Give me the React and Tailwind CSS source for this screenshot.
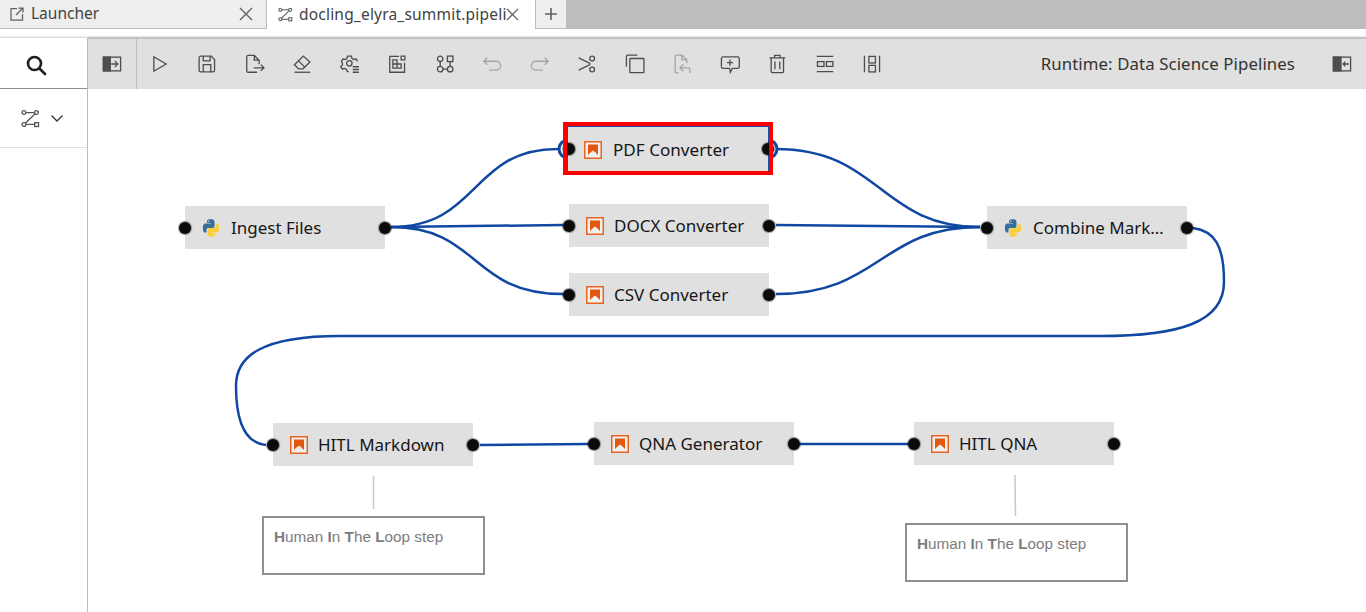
const fontCls = "font-['Noto_Sans','Open_Sans',sans-serif]";

function Ico({ children, dim }) {
  return (
    <svg width="22" height="22" viewBox="0 0 32 32" fill="none" stroke={dim ? "#a3a3a3" : "#4d4d4d"} strokeWidth="1.900" className="shrink-0">
      {children}
    </svg>
  );
}

function PipelineGlyph({ size = 16 }) {
  return (
    <svg width={size} height={size} viewBox="0 0 32 32" fill="none" stroke="#555" strokeWidth="2.200">
      <circle cx="5" cy="6" r="3.2" /><circle cx="26" cy="6" r="3.2" /><circle cx="5" cy="26" r="3.2" />
      <rect x="23" y="23" width="6.5" height="6.5" />
      <path d="M8.5 6h14M23.5 8.5 7.5 23.5M8.5 26h14" />
    </svg>
  );
}

function ToolBtn({ children }) {
  return <div className="w-[47.5px] flex justify-center shrink-0">{children}</div>;
}

function Toolbar() {
  return (
    <div className="h-[51px] bg-[#e0e0e0] flex items-center shrink-0 border-t border-[#c4c4c4] shadow-[0_-1px_1px_rgba(0,0,0,0.12)]">
      <div className="w-[49px] h-full flex items-center justify-center border-r border-[#bdbdbd] shrink-0">
        <Ico>
          <rect x="3.500" y="6" width="25" height="20" />
          <path d="M3.500 6h10v20h-10z" fill="#4d4d4d" />
          <path d="M15 16h9M20 11.500l4.500 4.500-4.500 4.500" />
        </Ico>
      </div>
      <div className="flex items-center -ml-[1px]">
        <ToolBtn><Ico><path d="M7 5.500v21L25 16z" /></Ico></ToolBtn>
        <ToolBtn><Ico><path d="M7 4.500h15l5 5V25a2.500 2.500 0 0 1-2.500 2.500H7A2.500 2.500 0 0 1 4.500 25V7A2.500 2.500 0 0 1 7 4.500z" /><path d="M10.500 4.500v7h10v-7M10.500 27.500V17h11v10.500" /></Ico></ToolBtn>
        <ToolBtn><Ico><path d="M19 28H6a2 2 0 0 1-2-2V5.500a2 2 0 0 1 2-2h9l7 7v6M15 3.500v7h7" /><path d="M14 21.500h15M24.500 17l4.500 4.500-4.500 4.500" /></Ico></ToolBtn>
        <ToolBtn><Ico><path d="M5 28h23" /><path d="M5 17 18 4.500 27.500 13l-10 10H11z" /><path d="M11 11.500l9 9" /></Ico></ToolBtn>
        <ToolBtn><Ico><path d="M14 27h-2l-1-3-3-1.500-3 1-2.500-3.500 2.500-2.500v-3L3.500 12 6 8.500l3 1 2.500-1.500 1-3.500h5.500l1 3.500 2.500 1.500 3-1L27 12" /><circle cx="15" cy="15" r="4" /><path d="M20 20h9M20 24h9M20 28h9" /></Ico></ToolBtn>
        <ToolBtn><Ico><path d="M19 5H5.500v23H27V14" /><path d="M22 4.500h5.500V10H22zM10 10h6v6h-6zM16 16h6v6h-6zM10 16v6h6" /></Ico></ToolBtn>
        <ToolBtn><Ico><circle cx="9" cy="8.500" r="4" /><rect x="19.500" y="4.500" width="8" height="8" /><circle cx="9" cy="23.500" r="4" /><circle cx="23.500" cy="23.500" r="4" /><path d="M9 12.500v7M23.500 12.500v7M13 23.500h6.500" /></Ico></ToolBtn>
        <ToolBtn><Ico dim><path d="M4 12h18a6.500 6.500 0 0 1 0 13H12M9 7l-5 5 5 5" /></Ico></ToolBtn>
        <ToolBtn><Ico dim><path d="M28 12H10a6.500 6.500 0 0 0 0 13h10M23 7l5 5-5 5" /></Ico></ToolBtn>
        <ToolBtn><Ico><circle cx="23.500" cy="8" r="3.500" /><circle cx="23.500" cy="24" r="3.500" /><path d="M4 7l17 8.500M4 25l17-8.500" /></Ico></ToolBtn>
        <ToolBtn><Ico><path d="M3.500 20V5a2 2 0 0 1 2-2h14" /><rect x="8.500" y="8" width="20.500" height="20.500" rx="1" /></Ico></ToolBtn>
        <ToolBtn><Ico dim><path d="M11 29H8a2 2 0 0 1-2-2V5a2 2 0 0 1 2-2h8l7 7v5M16 3v7h7" /><path d="M13 21.500h13a1.500 1.500 0 0 1 1.500 1.500v6M18 16.500l-5 5 5 5" /></Ico></ToolBtn>
        <ToolBtn><Ico><path d="M6 5.500h21a2.500 2.500 0 0 1 2.500 2.500v12a2.500 2.500 0 0 1-2.500 2.500h-7.500l-3 5.500-1-5.500H6A2.500 2.500 0 0 1 3.500 20V8A2.500 2.500 0 0 1 6 5.500z" /><path d="M16 9.500v9M11.500 14h9" /></Ico></ToolBtn>
        <ToolBtn><Ico><path d="M5 7h23M12.500 7V3.500h8V7M7.500 7v20a1.500 1.500 0 0 0 1.500 1.500h15a1.500 1.500 0 0 0 1.500-1.500V7M13 12.500v11M20 12.500v11" /></Ico></ToolBtn>
        <ToolBtn><Ico><path d="M4 5h24M4 27h24" /><rect x="5" y="12.500" width="9.500" height="7" /><rect x="18" y="12.500" width="9.500" height="7" /></Ico></ToolBtn>
        <ToolBtn><Ico><path d="M5 4v24M27 4v24" /><rect x="11.500" y="5" width="9.500" height="9.500" /><rect x="11.500" y="18" width="9.500" height="9.500" /></Ico></ToolBtn>
      </div>
      <div className="ml-auto flex items-center">
        <span className={`${fontCls} text-[16.800px] text-[#333] mr-[36px] tracking-[0.1px] whitespace-nowrap`}>Runtime: Data Science Pipelines</span>
        <div className="mr-[13px] w-[22px] flex justify-center">
          <Ico>
            <rect x="3.500" y="6" width="25" height="20" />
            <path d="M3.500 6h11v20h-11z" fill="#4d4d4d" />
            <path d="M26 16h-8M21 12.500 17.500 16l3.500 3.500" />
          </Ico>
        </div>
      </div>
    </div>
  );
}

function Tabs() {
  return (
    <div className={`${fontCls} h-[29px] bg-[#bdbdbd] flex shrink-0 text-[15.500px] text-[#424242]`}>
      <div className="w-[267px] h-full bg-[#eeeeee] border-r border-b border-[#bdbdbd] flex items-center pl-[9px] pr-[12px]">
        <svg width="16" height="16" viewBox="0 0 32 32" fill="none" stroke="#616161" strokeWidth="2.500">
          <path d="M16 5H4v23h23V16" /><path d="M19 4h9v9M28 4 14 18" />
        </svg>
        <span className="ml-[6px] flex-1">Launcher</span>
        <svg width="16" height="16" viewBox="0 0 16 16" stroke="#616161" strokeWidth="1.400"><path d="M2 2l12 12M14 2 2 14" /></svg>
      </div>
      <div className="w-[268px] h-full bg-white flex items-center pl-[11px]">
        <PipelineGlyph size={15} />
        <span className="ml-[6px] w-[207px] tracking-[0.2px] whitespace-nowrap">docling_elyra_summit.pipeli</span>
        <svg width="15" height="15" viewBox="0 0 16 16" stroke="#616161" strokeWidth="1.400" className="-ml-[1px]"><path d="M2 2l12 12M14 2 2 14" /></svg>
      </div>
      <div className="ml-[1px] w-[30px] h-full bg-[#eeeeee] border-b border-[#bdbdbd] flex items-center justify-center">
        <svg width="14" height="14" viewBox="0 0 14 14" stroke="#616161" strokeWidth="1.600"><path d="M7 1v12M1 7h12" /></svg>
      </div>
    </div>
  );
}

function Sidebar() {
  return (
    <div className="w-[88px] shrink-0 border-r border-[#bdbdbd] bg-white flex flex-col">
      <div className="h-[51px] border-b border-[#8f8f8f] flex items-center justify-center pr-[15px] pt-[4px] shrink-0">
        <svg width="24" height="24" viewBox="0 0 24 24" fill="none" stroke="#1f1f1f" strokeWidth="2.600">
          <circle cx="10.500" cy="10.500" r="6.500" /><path d="M15.500 15.500l5.500 5.500" strokeLinecap="round" />
        </svg>
      </div>
      <div className="h-[59px] border-b border-[#e0e0e0] flex items-center pl-[21px] shrink-0">
        <PipelineGlyph size={19} />
        <svg width="14" height="14" viewBox="0 0 14 14" fill="none" stroke="#333" strokeWidth="1.300" className="ml-[10px]"><path d="M1.500 4.500 7 10l5.500-5.500" /></svg>
      </div>
    </div>
  );
}

function PyIcon() {
  return (
    <svg width="20" height="20" viewBox="0 0 32 32" className="shrink-0">
      <path fill="#366f9f" d="M15.800 2c-6.500 0-6.100 2.800-6.100 2.800v3h6.300v1H7.100S3 8.300 3 15.900s3.600 7.300 3.600 7.300h2.100v-3.500s-.1-3.600 3.500-3.600h6s3.400.1 3.400-3.300V6.300S22.100 2 15.800 2zm-3.400 2a1.100 1.100 0 1 1 0 2.200 1.100 1.100 0 0 1 0-2.200z" />
      <path fill="#f7cf3d" d="M16.200 30c6.500 0 6.100-2.800 6.100-2.800v-3H16v-1h8.900s4.100.5 4.100-7.100-3.600-7.300-3.600-7.300h-2.100v3.500s.1 3.600-3.500 3.600h-6s-3.400-.1-3.400 3.300v6.500S9.900 30 16.200 30zm3.400-2a1.100 1.100 0 1 1 0-2.200 1.100 1.100 0 0 1 0 2.200z" />
    </svg>
  );
}

function KfpIcon() {
  return (
    <svg width="18" height="18" viewBox="0 0 18 18" className="shrink-0">
      <rect x="0.750" y="0.750" width="16.500" height="16.500" fill="#fff" fillOpacity="0.500" stroke="#e8651f" strokeWidth="1.500" />
      <path d="M4 3.500h10v10.500l-2.500-2.500L9 9.500l-2.500 2L4 14z" fill="#e4570e" />
    </svg>
  );
}

function Port({ side }) {
  return (
    <span className={`absolute ${side === "l" ? "-left-[6px]" : "-right-[6px]"} top-1/2 -mt-[6px] w-[12px] h-[12px] rounded-full bg-[#0b0b0b] shadow-[0_0_1px_1px_rgba(0,0,0,0.4)]`} />
  );
}

function Node({ pos, icon, label }) {
  return (
    <div className={`absolute ${pos} w-[200px] h-[43px] bg-[#e0e0e0] flex items-center pl-[17px]`}>
      {icon === "py" ? <span className="ml-[-1px] mr-[10px] flex w-[20px]"><PyIcon /></span> : <span className="mr-[10px] flex"><KfpIcon /></span>}
      <span className={`${fontCls} text-[17px] text-[#161616] whitespace-nowrap`}>{label}</span>
      <Port side="l" />
      <Port side="r" />
    </div>
  );
}

function SelectedNode() {
  return (
    <div className="absolute left-[475px] top-[33px] w-[210px] h-[53px]">
      <div className="absolute left-[4px] top-[4px] w-[202px] h-[46px] bg-[#e0e0e0] border border-[#1a4ca8] flex items-center pl-[16px] pt-[1px]">
        <span className="mr-[11px] flex"><KfpIcon /></span>
        <span className={`${fontCls} text-[17.100px] text-[#161616] whitespace-nowrap`}>PDF Converter</span>
        <span className="absolute -left-[5px] top-1/2 -mt-[6px] w-[12px] h-[12px] rounded-full bg-[#0b0b0b] shadow-[0_0_1px_1px_rgba(0,0,0,0.4)]" />
        <span className="absolute -right-[6px] top-1/2 -mt-[6px] w-[12px] h-[12px] rounded-full bg-[#0b0b0b] shadow-[0_0_1px_1px_rgba(0,0,0,0.4)]" />
      </div>
      <div className="absolute inset-0 border-4 border-[#ff0000]" />
    </div>
  );
}

function Comment({ pos }) {
  return (
    <div className={`absolute ${pos} w-[223px] h-[59px] bg-white border-2 border-[#8f8f8f] px-[10px] pt-[10px] font-['Liberation_Sans',Arial,sans-serif] text-[15.300px] leading-[18px] text-[#7d7d7d]`}>
      <b>H</b>uman <b>I</b>n <b>T</b>he <b>L</b>oop step
    </div>
  );
}

function Links() {
  return (
    <svg className="absolute left-0 top-0" width="1278" height="523" viewBox="88 89 1278 523" fill="none">
      <g stroke="#0f47a1" strokeWidth="2.500">
        <path d="M391 227C480 227 470 149 558 149" />
        <path d="M391 227 563 225" />
        <path d="M391 227C480 227 470 294 563 294" />
        <path d="M776 149C880 149 880 227 980 227" />
        <path d="M776 225 980 227" />
        <path d="M776 294C880 294 880 227 980 227" />
        <path d="M1193 228C1215 231 1224 246 1224 282C1224 322 1180 336 1100 336L340 336C262 336 236 356 236 386C236 420 244 443 266 445" />
        <path d="M480 445 588 444" />
        <path d="M800 444 908 444" />
      </g>
      <circle cx="568" cy="149" r="9" stroke="#0f47a1" strokeWidth="3" />
      <circle cx="768" cy="149" r="9" stroke="#0f47a1" strokeWidth="3" />
      <path d="M373.500 476v33" stroke="#c8c8c8" strokeWidth="1.500" />
      <path d="M1015 475l.5 41" stroke="#c8c8c8" strokeWidth="1.500" />
    </svg>
  );
}

export default function App() {
  return (
    <div className="w-[1366px] h-[612px] bg-white flex flex-col overflow-hidden">
      <Tabs />
      <div className="h-[9px] shrink-0 bg-white" />
      <div className="flex flex-1 min-h-0 shadow-[0_-1px_2px_rgba(0,0,0,0.2)]">
        <Sidebar />
        <div className="flex-1 flex flex-col min-w-0">
          <Toolbar />
          <div className="relative flex-1 bg-white">
            <Links />
            <Node pos="left-[97px] top-[117px]" icon="py" label="Ingest Files" />
            <SelectedNode />
            <Node pos="left-[481px] top-[115px]" icon="kfp" label="DOCX Converter" />
            <Node pos="left-[481px] top-[184px]" icon="kfp" label="CSV Converter" />
            <Node pos="left-[899px] top-[117px]" icon="py" label="Combine Mark…" />
            <Node pos="left-[185px] top-[334px]" icon="kfp" label="HITL Markdown" />
            <Node pos="left-[506px] top-[333px]" icon="kfp" label="QNA Generator" />
            <Node pos="left-[826px] top-[333px]" icon="kfp" label="HITL QNA" />
            <Comment pos="left-[174px] top-[427px]" />
            <Comment pos="left-[817px] top-[434px]" />
          </div>
        </div>
      </div>
    </div>
  );
}
